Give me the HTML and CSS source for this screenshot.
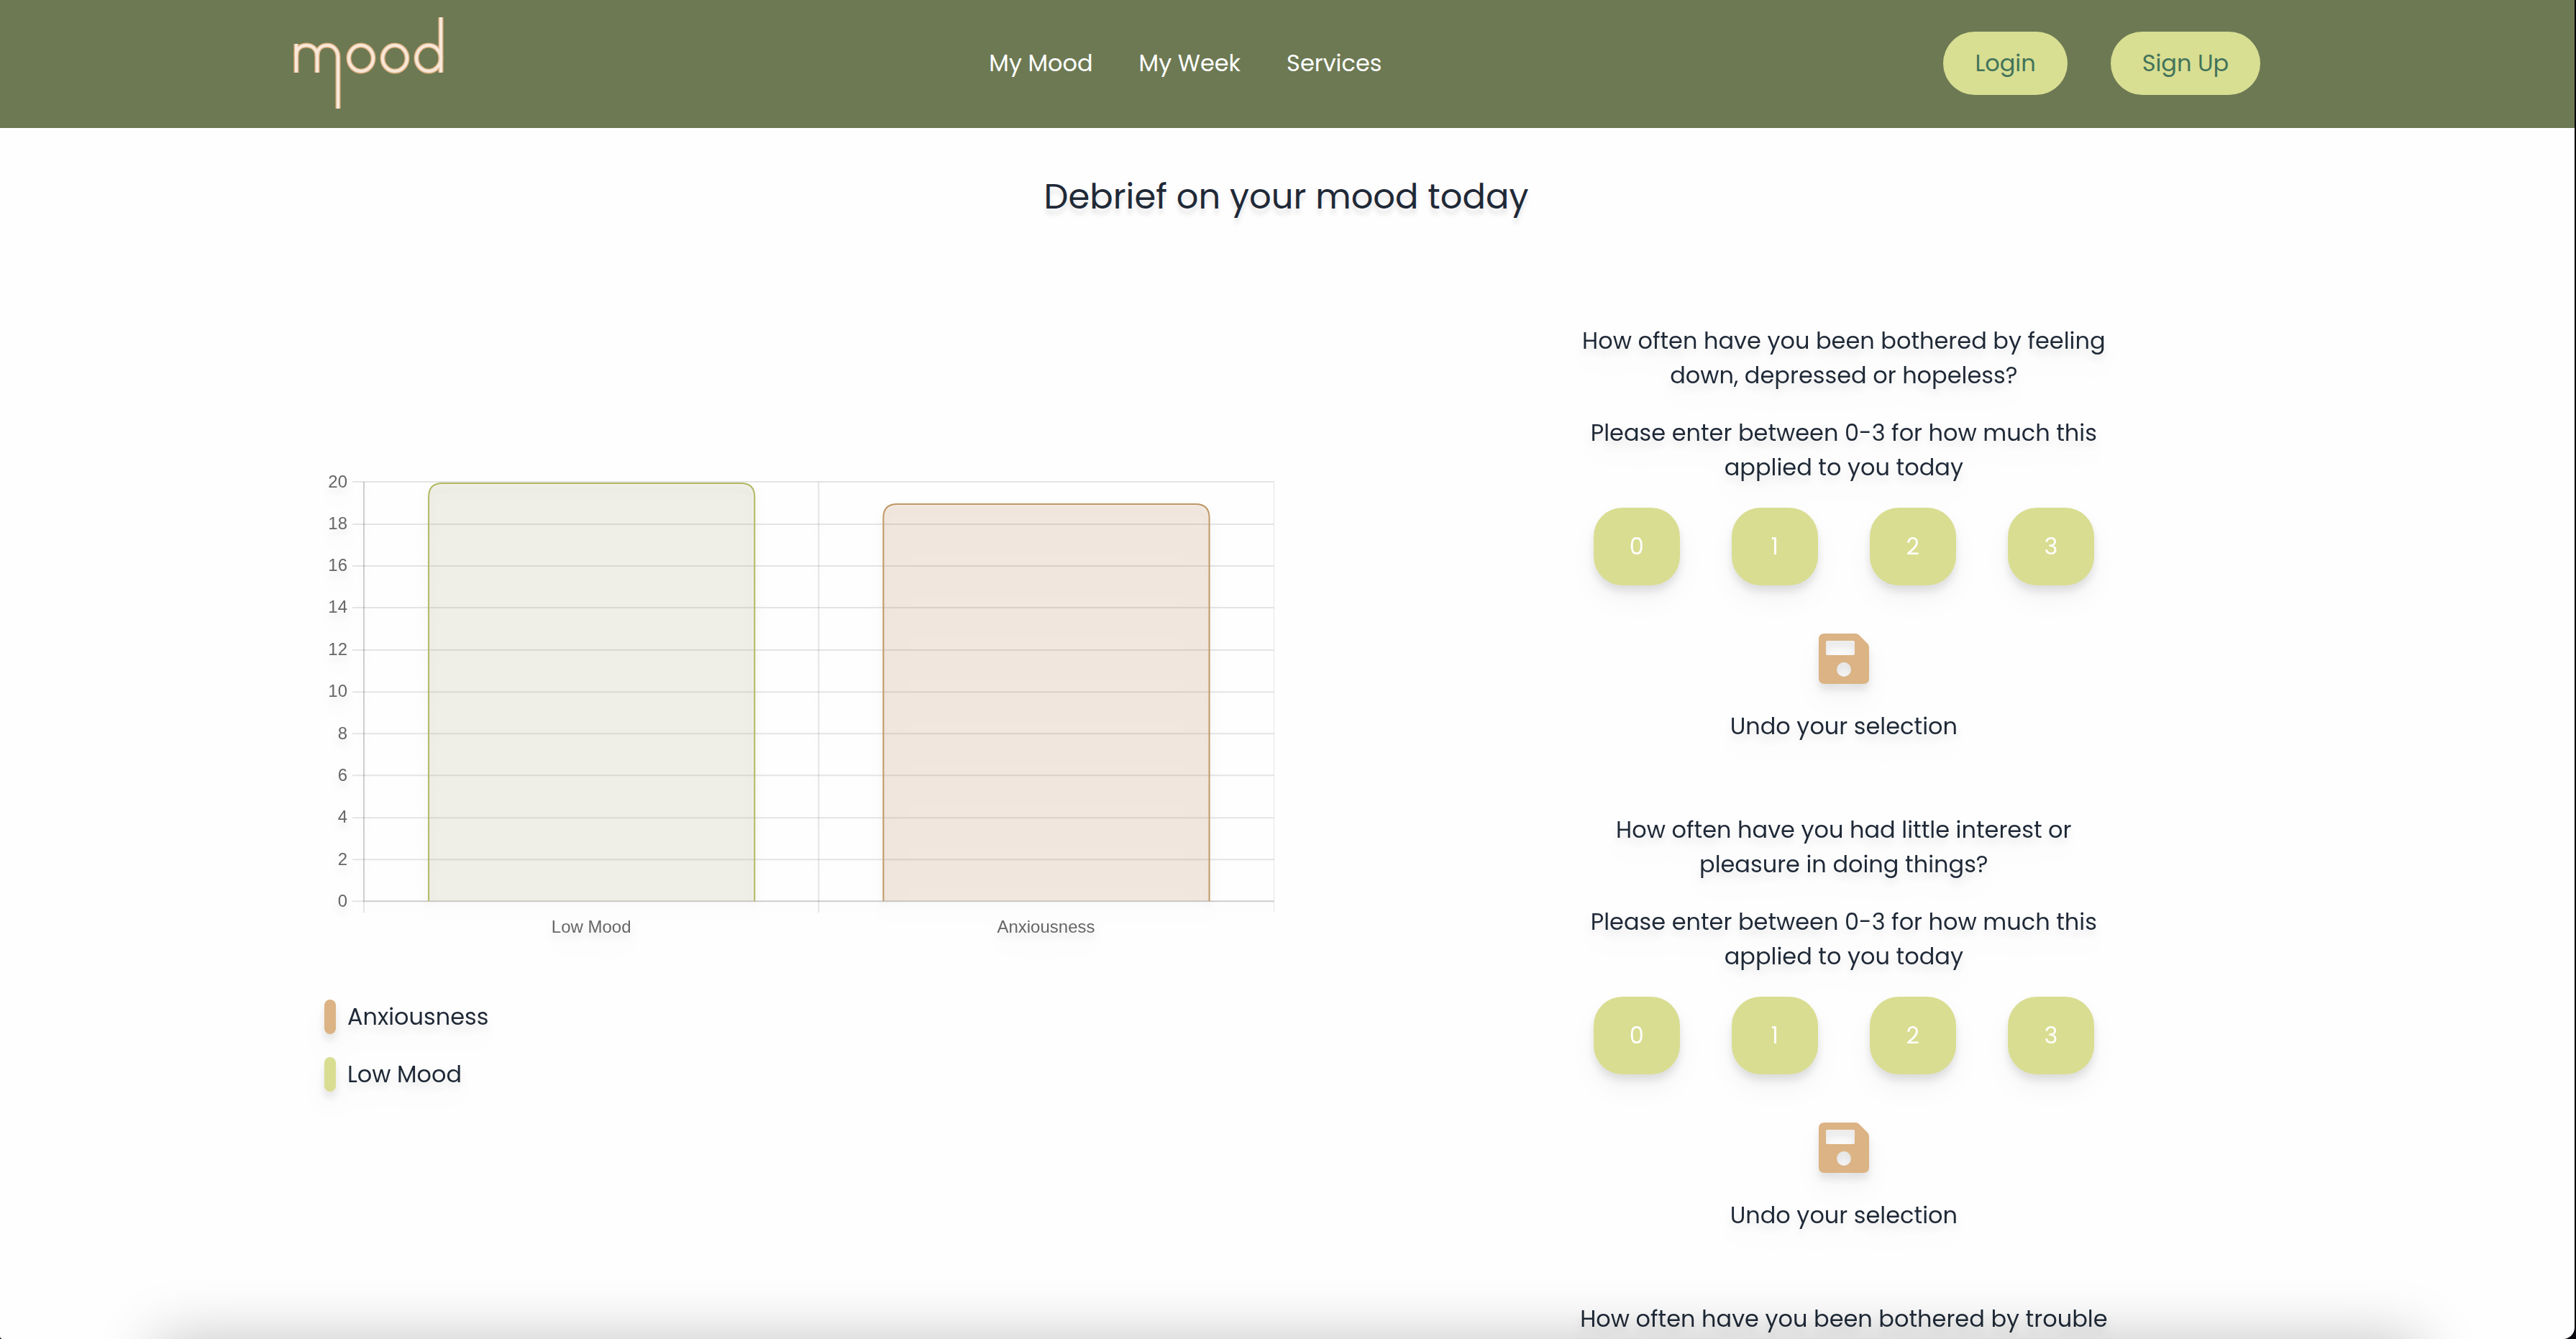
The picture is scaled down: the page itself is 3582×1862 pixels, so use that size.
FILE: index.html
```html
<!DOCTYPE html>
<html lang="en">
<head>
  <meta charset="utf-8">
  <meta name="viewport" content="width=device-width, initial-scale=1">
  <title>Mood</title>
  <link rel="stylesheet" href="styles.css">
</head>
<body>
  <div class="window">
    <header class="site-header">
      <a class="logo" href="#" aria-label="mood">
        <svg class="logo-mark" viewBox="0 0 209 128" aria-hidden="true">
          <defs>
            <g id="mark">
              <line x1="4" y1="37" x2="4" y2="77"/>
              <path d="M4 53C4 44 10 39 18 39S33 44 33 54V77"/>
              <path d="M33 54C33 44 39 39 47 39S62 45 62 56V127"/>
              <ellipse cx="94" cy="57" rx="17" ry="18"/>
              <ellipse cx="141" cy="57" rx="17" ry="18"/>
              <ellipse cx="188" cy="57" rx="17" ry="18"/>
              <line x1="205" y1="0" x2="205" y2="77"/>
            </g>
          </defs>
          <use class="mark-edge" href="#mark"/>
          <use class="mark-face" href="#mark"/>
        </svg>
      </a>
      <nav class="nav">
        <a href="#">My Mood</a>
        <a href="#">My Week</a>
        <a href="#">Services</a>
      </nav>
      <div class="account">
        <button class="pill" type="button">Login</button>
        <button class="pill" type="button">Sign Up</button>
      </div>
    </header>

    <div class="page">
      <h1 class="title">Debrief on your mood today</h1>

      <main class="content">
        <section class="chart-panel">
          <svg class="chart shadow" viewBox="0 0 1322 655" role="img" aria-label="Low Mood 20, Anxiousness 19">
            <g class="grid">
              <path d="M39 15H1320M39 74H1320M39 132H1320M39 190H1320M39 249H1320M39 307H1320M39 365H1320M39 423H1320M39 482H1320M39 540H1320M39 598H1320"/>
              <path d="M55 15V614M687 15V614"/>
              <path class="thin" d="M1320 15V614"/>
              <path d="M55 15V598H1320"/>
            </g>
            <path class="bar low" d="M145 598V36Q145 17 164 17H579Q598 17 598 36V598"/>
            <path class="bar anxious" d="M777 598V65Q777 46 796 46H1211Q1230 46 1230 65V598"/>
            <g class="tick">
              <text x="32" y="23">20</text>
              <text x="32" y="81">18</text>
              <text x="32" y="139">16</text>
              <text x="32" y="197">14</text>
              <text x="32" y="256">12</text>
              <text x="32" y="314">10</text>
              <text x="32" y="373">8</text>
              <text x="32" y="431">6</text>
              <text x="32" y="489">4</text>
              <text x="32" y="548">2</text>
              <text x="32" y="606">0</text>
            </g>
            <g class="category">
              <text x="371" y="642">Low Mood</text>
              <text x="1003" y="642">Anxiousness</text>
            </g>
          </svg>
          <ul class="legend shadow">
            <li><span class="swatch swatch-anxious"></span>Anxiousness</li>
            <li><span class="swatch swatch-low"></span>Low Mood</li>
          </ul>
        </section>

        <section class="questions">
          <article class="question shadow">
            <p>How often have you been bothered by feeling down, depressed or hopeless?</p>
            <p>Please enter between 0-3 for how much this applied to you today</p>
            <div class="scores">
              <button type="button">0</button>
              <button type="button">1</button>
              <button type="button">2</button>
              <button type="button">3</button>
            </div>
            <button class="save" type="button" aria-label="Save">
              <svg viewBox="0 0 70 70" aria-hidden="true">
                <path fill-rule="evenodd" d="M8 0H51Q54 0 56 2L68 14Q70 16 70 19V62Q70 70 62 70H8Q0 70 0 62V8Q0 0 8 0ZM12 10Q10 10 10 12V28Q10 30 12 30H48Q50 30 50 28V12Q50 10 48 10ZM35 40A10 10 0 1 0 35 60A10 10 0 1 0 35 40Z"/>
              </svg>
            </button>
            <button class="undo" type="button">Undo your selection</button>
          </article>

          <article class="question shadow">
            <p>How often have you had little interest or pleasure in doing things?</p>
            <p>Please enter between 0-3 for how much this applied to you today</p>
            <div class="scores">
              <button type="button">0</button>
              <button type="button">1</button>
              <button type="button">2</button>
              <button type="button">3</button>
            </div>
            <button class="save" type="button" aria-label="Save">
              <svg viewBox="0 0 70 70" aria-hidden="true">
                <path fill-rule="evenodd" d="M8 0H51Q54 0 56 2L68 14Q70 16 70 19V62Q70 70 62 70H8Q0 70 0 62V8Q0 0 8 0ZM12 10Q10 10 10 12V28Q10 30 12 30H48Q50 30 50 28V12Q50 10 48 10ZM35 40A10 10 0 1 0 35 60A10 10 0 1 0 35 40Z"/>
              </svg>
            </button>
            <button class="undo" type="button">Undo your selection</button>
          </article>

          <article class="question shadow">
            <p>How often have you been bothered by trouble</p>
          </article>
        </section>
      </main>
    </div>
    <div class="bottom-shade"></div>
  </div>
</body>
</html>
```
FILE: styles.css
```css
* {
  box-sizing: border-box;
}

html {
  background: #07090c;
}

body {
  margin: 0;
  color: #1f2937;
  font-family: Poppins, Inter, sans-serif;
  font-size: 32px;
  line-height: 48px;
}

p,
ul,
h1 {
  margin: 0;
  padding: 0;
}

button {
  border: 0;
  padding: 0;
  background: none;
  color: inherit;
  font: inherit;
  cursor: pointer;
}

.window {
  height: 100vh;
  margin-right: 2px;
  overflow: hidden auto;
  scrollbar-width: none;
  background: #fefefe;
  border-radius: 0 0 16px 4px;
}

.shadow {
  filter: drop-shadow(0 20px 16px rgb(0 0 0 / 4%)) drop-shadow(0 8px 6px rgb(0 0 0 / 10%));
}

/* Header */

.site-header {
  display: grid;
  grid-template-columns: 19fr auto 24fr;
  align-items: center;
  padding: 24px 12.2% 26px 11.4%;
  background: #6d7953;
}

.logo-mark {
  display: block;
  width: 209px;
  height: 128px;
  fill: none;
}

.mark-edge {
  stroke: #e0b384;
  stroke-width: 7px;
}

.mark-face {
  stroke: #f7e8da;
  stroke-width: 4px;
}

.nav {
  display: flex;
  gap: 64px;
}

.nav a {
  color: #fff;
  text-decoration: none;
}

.account {
  display: flex;
  justify-content: flex-end;
  gap: 60px;
}

.pill {
  height: 88px;
  padding: 0 44px;
  border-radius: 44px;
  background: #d8de92;
  color: #42735a;
}

/* Page */

.page {
  padding-right: 3px;
}

.title {
  margin: 60px 0 140px;
  font-size: 48px;
  font-weight: 400;
  line-height: 72px;
  text-align: center;
  text-shadow: 0 8px 6px rgb(0 0 0 / 10%);
}

.content {
  display: grid;
  grid-template-columns: 1fr 1fr;
  width: 86.7%;
  margin: 0 auto;
}

/* Chart */

.chart-panel {
  padding: 205px 15px 0 213px;
}

.chart {
  display: block;
  width: 100%;
}

.grid {
  fill: none;
  stroke: rgb(0 0 0 / 10%);
  stroke-width: 2px;
}

.grid .thin {
  stroke-width: 1px;
}

.bar {
  stroke-width: 2px;
}

.bar.low {
  fill: rgb(155 145 80 / 12%);
  stroke: #b2b962;
}

.bar.anxious {
  fill: rgb(185 120 65 / 15%);
  stroke: #bf9765;
}

.tick,
.category {
  fill: #666;
  font-family: "Liberation Sans", Arial, sans-serif;
  font-size: 24px;
}

.tick {
  text-anchor: end;
}

.category {
  text-anchor: middle;
}

.legend {
  display: flex;
  flex-direction: column;
  gap: 32px;
  margin-top: 80px;
  list-style: none;
}

.legend li {
  display: flex;
  align-items: center;
  gap: 16px;
}

.swatch {
  width: 16px;
  height: 48px;
  border-radius: 8px;
}

.swatch-anxious {
  background: #dbb384;
}

.swatch-low {
  background: #d9dd91;
}

/* Questions */

.questions {
  display: flex;
  flex-direction: column;
  align-items: center;
  gap: 96px;
}

.question {
  display: flex;
  flex-direction: column;
  align-items: center;
  gap: 32px;
  width: 768px;
  max-width: 100%;
  text-align: center;
}

.scores {
  display: flex;
  gap: 72px;
}

.scores button {
  width: 120px;
  height: 108px;
  border-radius: 40px;
  background: #d9dd91;
  color: #fff;
}

.save {
  width: 70px;
  height: 70px;
  margin: 35px 0 3px;
}

.save svg {
  display: block;
  fill: #dbb384;
}

/* Soft shade rising from the lower edge of the window */

.bottom-shade {
  position: fixed;
  right: 6%;
  bottom: -160px;
  left: 6%;
  height: 160px;
  border-radius: 20px;
  box-shadow: 0 0 84px rgb(0 0 0 / 23%);
  pointer-events: none;
}
```
